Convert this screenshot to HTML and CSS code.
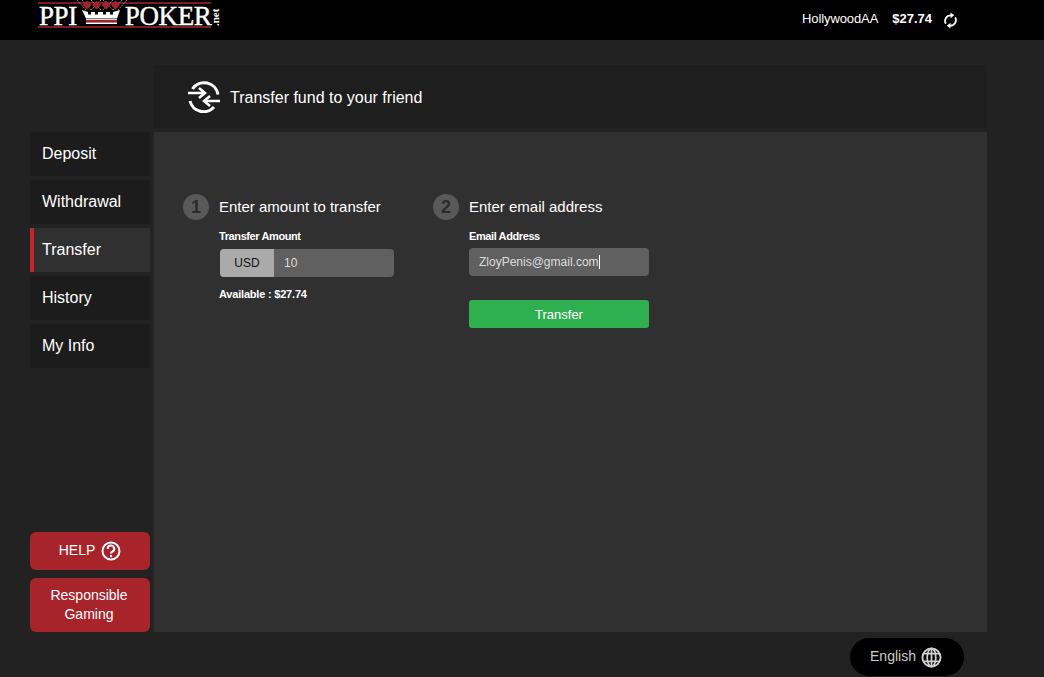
FILE: index.html
```html
<!DOCTYPE html>
<html lang="en">
  <head>
    <meta charset="UTF-8" />
    <meta name="viewport" content="width=device-width, initial-scale=1.0" />
    <title>Transfer</title>
    <link rel="stylesheet" href="styles.css">
  </head>
  <body>
    <!-- Header -->
    <header class="top-bar">
      <div class="logo">
        <div class="logo__mark">
          <span class="logo__word logo__word--short">PPI</span>
          <svg class="logo__crown" viewBox="0 0 50 25" width="50" height="25">
            <path d="M0 0L9 10M50 0L41 10M5 0L14 10M45 0L36 10M14 0L24 10M24 0L14 10M26 0L36 10M36 0L26 10" fill="none" stroke="#8a8a8a" stroke-width="1" stroke-dasharray="2 1"/>
            <path d="M10 0.500L14.500 5L10 9.500L5.500 5ZM19.500 0.500L24 5L19.500 9.500L15 5ZM29 0.500L33.500 5L29 9.500L24.500 5ZM38.500 0.500L43 5L38.500 9.500L34 5Z" fill="#a4232b"/>
            <path d="M5 10L11 12L11 14.500H14V12H18V14.500H21V12H26V14.500H29V12H33V14.500H36V12L43 10L40 18.500H9Z" fill="#fff"/>
            <path d="M9 19H40V20H9Z" fill="#ddd"/>
            <path d="M9 20H40V22.500H9Z" fill="#a4232b"/>
            <path d="M9 22.500H40V24H9Z" fill="#fff"/>
          </svg>
          <span class="logo__word">POKER</span>
        </div>
        <span class="logo__net">.net</span>
      </div>
      <div class="account">
        <span class="account__name">HollywoodAA</span>
        <span class="account__balance">$27.74</span>
        <svg class="account__refresh" viewBox="0 0 16 18" width="15" height="17">
          <path d="M3 12.500A6 6 0 0 1 8.500 3.500" fill="none" stroke="#fff" stroke-width="1.800"/>
          <path d="M8 0.500L12 3.500L8 6.500Z" fill="#fff"/>
          <path d="M13 5.500A6 6 0 0 1 7.500 14.500" fill="none" stroke="#fff" stroke-width="1.800"/>
          <path d="M8 11.500L4 14.500L8 17.500Z" fill="#fff"/>
        </svg>
      </div>
    </header>

    <main class="cashier">
      <!-- Title -->
      <div class="cashier__title">
        <svg class="cashier__icon" viewBox="0 0 34 32" width="34" height="32">
          <path d="M5.500 8A14 14 0 0 1 31 13.500" fill="none" stroke="#fff" stroke-width="3"/>
          <path d="M3 20A14 14 0 0 0 27 26" fill="none" stroke="#fff" stroke-width="3"/>
          <path d="M1 12H18" stroke="#fff" stroke-width="2.500"/>
          <path d="M12 7L18 12L12 17" fill="none" stroke="#fff" stroke-width="2.500"/>
          <path d="M33 20H17" stroke="#fff" stroke-width="2.500"/>
          <path d="M23 15L17 20L23 25" fill="none" stroke="#fff" stroke-width="2.500"/>
        </svg>
        <span>Transfer fund to your friend</span>
      </div>

      <!-- Sidebar -->
      <aside class="side-nav">
        <nav class="side-nav__list">
          <a class="side-nav__item">Deposit</a>
          <a class="side-nav__item">Withdrawal</a>
          <a class="side-nav__item side-nav__item--active">Transfer</a>
          <a class="side-nav__item">History</a>
          <a class="side-nav__item">My Info</a>
        </nav>
        <div class="side-nav__actions">
          <a class="side-btn side-btn--help">
            HELP
            <svg viewBox="0 0 20 20" width="20" height="20">
              <circle cx="10" cy="10" r="8.500" fill="none" stroke="#fff" stroke-width="2"/>
              <path d="M6.800 8A3.200 3.200 0 1 1 11.500 10.500C10.500 11 10 11.500 10 12.500" fill="none" stroke="#fff" stroke-width="2"/>
              <circle cx="10" cy="15" r="1.200" fill="#fff"/>
            </svg>
          </a>
          <a class="side-btn side-btn--gaming">Responsible<br>Gaming</a>
        </div>
      </aside>

      <!-- Form -->
      <section class="panel">
        <div class="step">
          <span class="step__num">1</span>
          <div class="step__body">
            <h2 class="step__title">Enter amount to transfer</h2>
            <label class="field-label">Transfer Amount</label>
            <div class="amount-input">
              <span class="amount-input__currency">USD</span>
              <span class="amount-input__value">10</span>
            </div>
            <p class="available">Available : $27.74</p>
          </div>
        </div>
        <div class="step">
          <span class="step__num">2</span>
          <div class="step__body">
            <h2 class="step__title">Enter email address</h2>
            <label class="field-label">Email Address</label>
            <div class="text-input">ZloyPenis@gmail.com<span class="text-input__caret"></span></div>
            <button class="transfer-btn">Transfer</button>
          </div>
        </div>
      </section>
    </main>

    <footer class="lang-row">
      <div class="lang-btn">
        English
        <svg viewBox="0 0 22 22" width="21" height="21">
          <circle cx="11" cy="11" r="9.500" fill="none" stroke="#d0d0d0" stroke-width="2"/>
          <ellipse cx="11" cy="11" rx="4.500" ry="9.500" fill="none" stroke="#d0d0d0" stroke-width="1.800"/>
          <path d="M11 1V21M2.500 7H19.500M2.500 15H19.500" stroke="#d0d0d0" stroke-width="1.800"/>
        </svg>
      </div>
    </footer>
  </body>
</html>
```

FILE: styles.css
```css
* {
  box-sizing: border-box;
}

body {
  margin: 0;
  height: 677px;
  overflow: hidden;
  background-color: #222;
  color: #fff;
  font-family: "Liberation Sans", Arial, sans-serif;
}

/* Header */
.top-bar {
  height: 40px;
  background-color: #000;
  display: flex;
  justify-content: space-between;
  padding: 0 86px 0 38px;
  overflow: hidden;
}

.logo {
  display: flex;
  height: 28px;
}

.logo__mark {
  width: 173px;
  height: 26px;
  margin-top: 2px;
  border-top: 2px solid #7d1a20;
  border-bottom: 2px solid #7d1a20;
  display: flex;
  align-items: center;
}

.logo__word {
  font-family: "Liberation Serif", serif;
  font-size: 27px;
  line-height: 22px;
  letter-spacing: -0.4px;
  margin-top: 1px;
  color: #fff;
  -webkit-text-stroke: 0.4px #fff;
}

.logo__word--short {
  margin-left: 1px;
}

.logo__crown {
  flex: none;
  align-self: flex-start;
  margin: -4px -2px 0 0;
  overflow: visible;
}

.logo__net {
  writing-mode: vertical-rl;
  transform: rotate(180deg);
  font-family: "Liberation Serif", serif;
  font-size: 11px;
  font-weight: bold;
  line-height: 8px;
  height: 24px;
  margin-top: 2px;
  text-align: left;
}

.account {
  display: flex;
  align-items: center;
  height: 36px;
  font-size: 13px;
}

.account__name {
  letter-spacing: -0.1px;
  margin-right: 14px;
}

.account__balance {
  font-weight: bold;
  margin-right: 11px;
}

.account__refresh {
  margin-top: 5px;
}

/* Main grid */
.cashier {
  display: grid;
  grid-template-columns: 120px 833px;
  grid-template-rows: 63px 500px;
  column-gap: 4px;
  row-gap: 4px;
  margin: 25px 0 0 30px;
}

.cashier__title {
  grid-column: 2;
  background-color: #1e1e1e;
  display: flex;
  align-items: center;
  gap: 9px;
  padding: 2px 0 0 33px;
  font-size: 16px;
}

.cashier__icon {
  margin-top: -2px;
}

.side-nav {
  grid-column: 1;
  display: flex;
  flex-direction: column;
  justify-content: space-between;
}

.side-nav__list {
  display: flex;
  flex-direction: column;
  gap: 4px;
}

.side-nav__item {
  height: 44px;
  line-height: 44px;
  padding-left: 12px;
  background-color: #1c1c1c;
  font-size: 16px;
}

.side-nav__item--active {
  background-color: #303030;
  border-left: 4px solid #c4252d;
  padding-left: 8px;
}

.side-nav__actions {
  display: flex;
  flex-direction: column;
  gap: 8px;
}

.side-btn {
  background-color: #a8242b;
  border-radius: 6px;
  font-size: 14px;
  text-align: center;
}

.side-btn--help {
  height: 38px;
  display: flex;
  align-items: center;
  justify-content: center;
  gap: 6px;
  padding-bottom: 2px;
}

.side-btn--help svg {
  margin-top: 2px;
}

.side-btn--gaming {
  height: 54px;
  line-height: 19px;
  padding: 8px 2px 0 0;
}

/* Panel */
.panel {
  background-color: #303030;
  display: flex;
  padding: 62px 0 0 29px;
}

.step {
  width: 250px;
  display: flex;
  gap: 10px;
}

.step__num {
  flex: none;
  width: 26px;
  height: 26px;
  border-radius: 50%;
  background-color: #595959;
  color: #2b2b2b;
  font-size: 18px;
  font-weight: bold;
  line-height: 26px;
  text-align: center;
}

.step__title {
  margin: 0;
  font-size: 15px;
  font-weight: normal;
  line-height: 26px;
}

.field-label {
  display: block;
  margin-top: 9px;
  font-size: 11px;
  font-weight: bold;
  letter-spacing: -0.4px;
  line-height: 14px;
}

.amount-input {
  display: flex;
  width: 174px;
  height: 28px;
  margin: 6px 0 0 1px;
  border-radius: 4px;
  overflow: hidden;
  background-color: #606060;
  font-size: 12px;
  line-height: 28px;
}

.amount-input__currency {
  width: 54px;
  background-color: #aaa;
  color: #111;
  text-align: center;
}

.amount-input__value {
  padding-left: 10px;
  color: #ddd;
}

.available {
  margin: 10px 0 0;
  font-size: 11px;
  font-weight: bold;
  letter-spacing: -0.2px;
  line-height: 14px;
}

.text-input {
  display: flex;
  align-items: center;
  width: 180px;
  height: 28px;
  margin-top: 5px;
  padding-left: 10px;
  border-radius: 4px;
  background-color: #606060;
  color: #ddd;
  font-size: 12px;
}

.text-input__caret {
  width: 1px;
  height: 14px;
  background-color: #fff;
}

.transfer-btn {
  display: block;
  width: 180px;
  height: 28px;
  margin-top: 24px;
  border: none;
  border-radius: 3px;
  background-color: #2fb050;
  color: #fff;
  font-family: inherit;
  font-size: 13px;
}

/* Language */
.lang-row {
  display: flex;
  justify-content: flex-end;
  padding: 6px 80px 0 0;
}

.lang-btn {
  width: 114px;
  height: 38px;
  border-radius: 19px;
  background-color: #000;
  color: #ccc;
  font-size: 14px;
  display: flex;
  align-items: center;
  justify-content: center;
  gap: 5px;
  padding: 0 2px 2px 0;
}

.lang-btn svg {
  margin-top: 2px;
}
```
